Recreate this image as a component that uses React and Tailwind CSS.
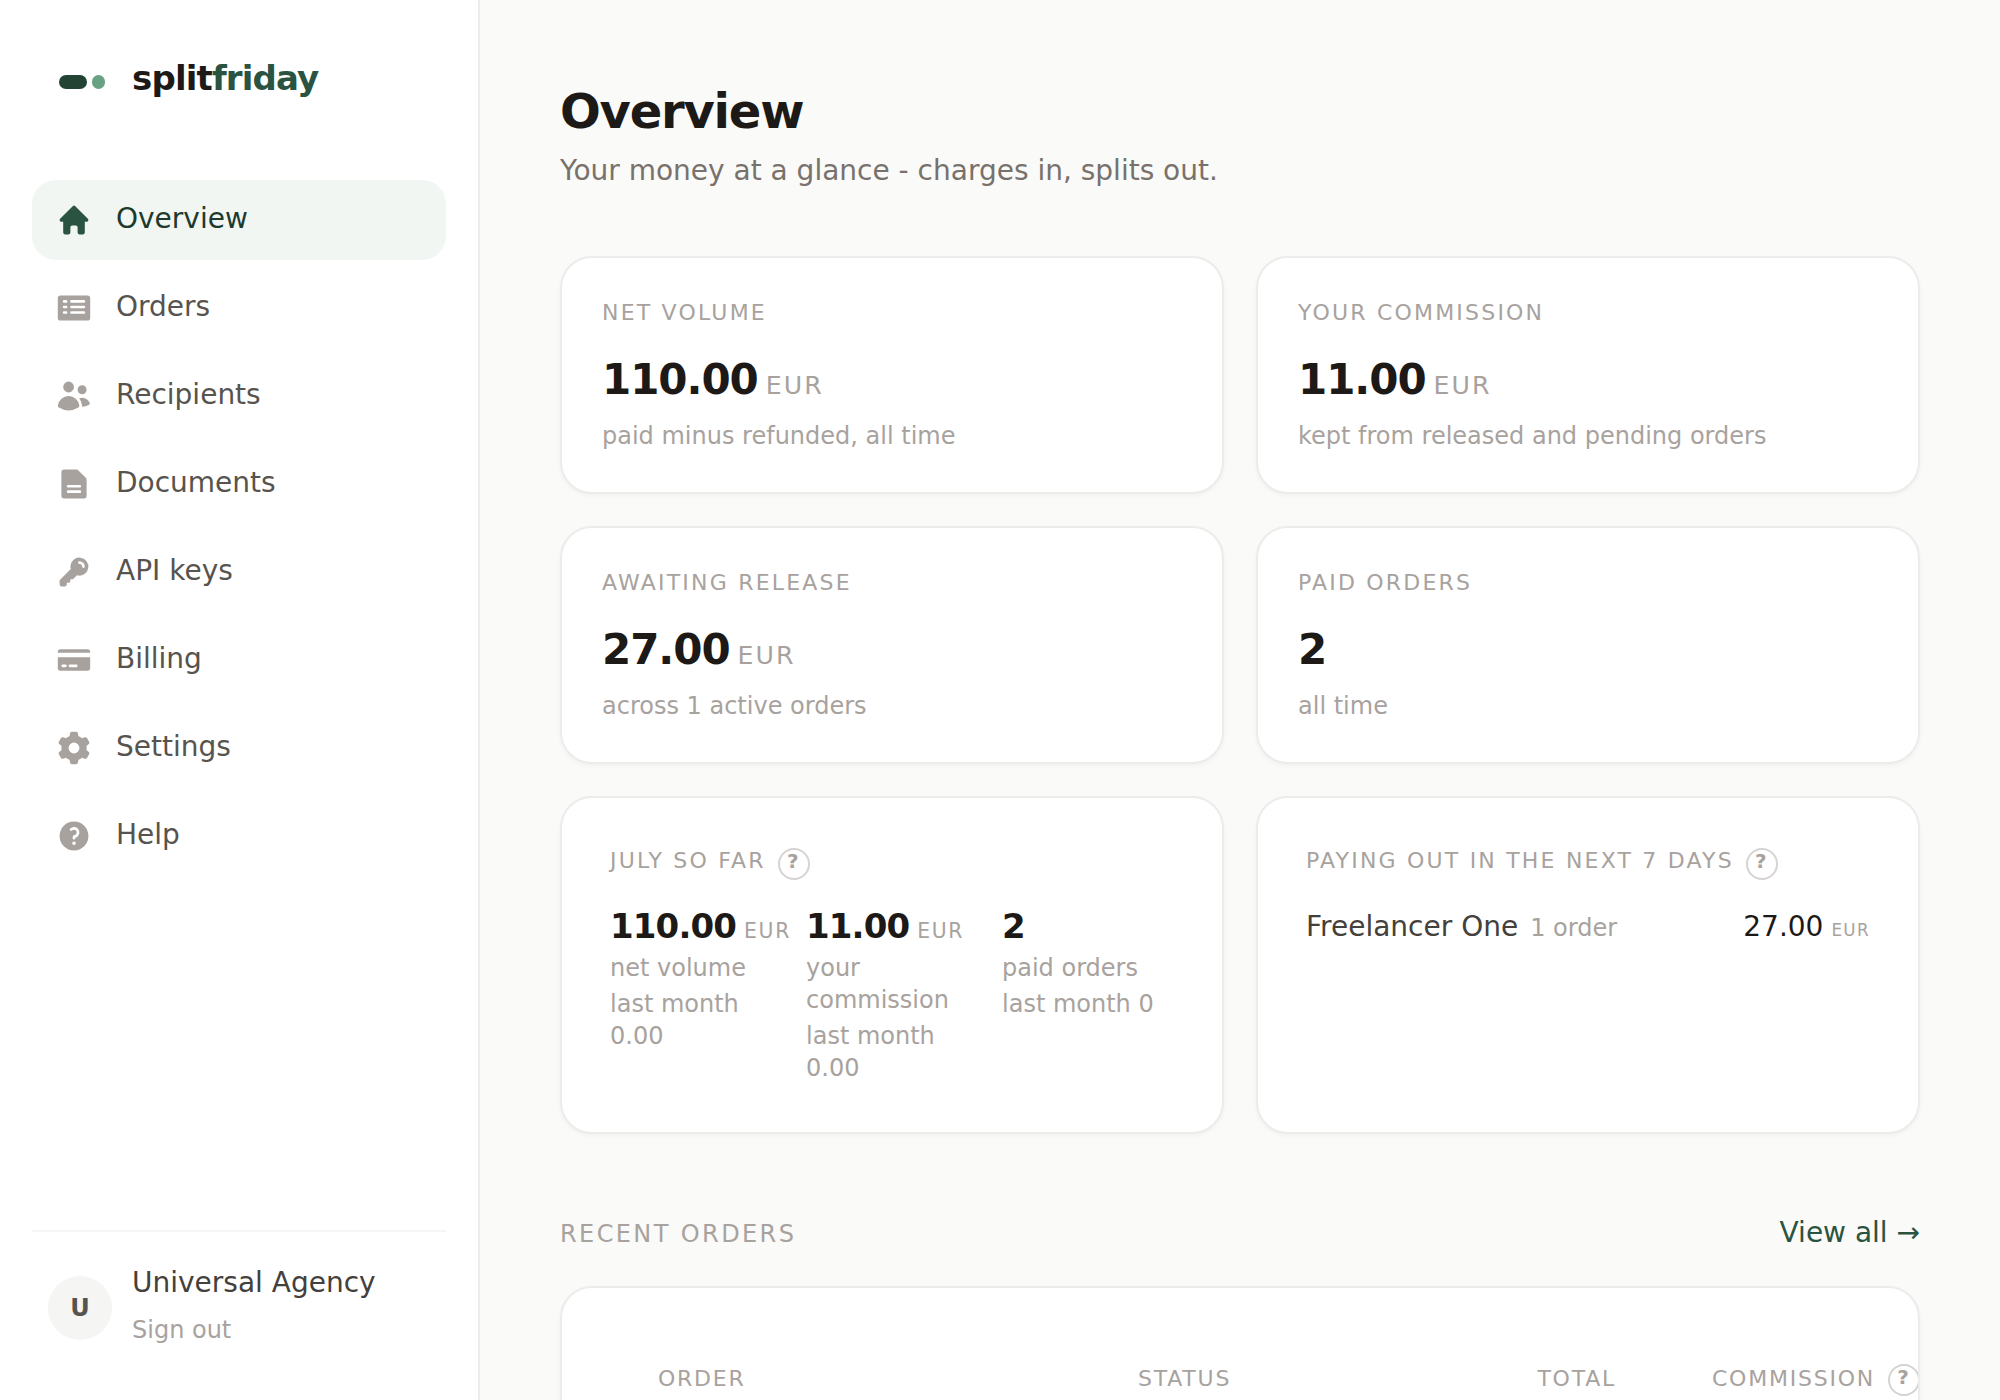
import {
  HiMiniHome, HiMiniUsers, HiMiniDocumentText, HiMiniKey,
  HiMiniCreditCard, HiMiniCog6Tooth, HiMiniQuestionMarkCircle,
} from "react-icons/hi2";

function OrdersIcon({ className }) {
  return (
    <svg viewBox="0 0 20 20" className={className} fill="currentColor">
      <path fillRule="evenodd" clipRule="evenodd" d="M2.5 3A1.5 1.5 0 0 0 1 4.5v11A1.5 1.5 0 0 0 2.5 17h15a1.5 1.5 0 0 0 1.500-1.500v-11A1.500 1.500 0 0 0 17.500 3h-15ZM4.500 5.600h1.100a.75.75 0 0 1 0 1.500H4.500a.75.75 0 0 1 0-1.500Zm4.100 0h6.900a.75.75 0 0 1 0 1.500H8.600a.75.75 0 0 1 0-1.500ZM4.500 8.700h1.100a.75.75 0 0 1 0 1.500H4.500a.75.75 0 0 1 0-1.500Zm4.100 0h6.900a.75.75 0 0 1 0 1.500H8.600a.75.75 0 0 1 0-1.500ZM4.500 11.750h1.100a.75.75 0 0 1 0 1.500H4.500a.75.75 0 0 1 0-1.500Zm4.100 0h6.900a.75.75 0 0 1 0 1.500H8.600a.75.75 0 0 1 0-1.500Z" />
    </svg>
  );
}

const NAV = [
  ["Overview", HiMiniHome],
  ["Orders", OrdersIcon],
  ["Recipients", HiMiniUsers],
  ["Documents", HiMiniDocumentText],
  ["API keys", HiMiniKey],
  ["Billing", HiMiniCreditCard],
  ["Settings", HiMiniCog6Tooth],
  ["Help", HiMiniQuestionMarkCircle],
];

function Hint() {
  return (
    <span className="flex size-8 shrink-0 items-start justify-center rounded-full border-2 border-[#d6d3d1] text-[20px] leading-[22px] font-bold text-[#a8a29e]">?</span>
  );
}

function Card({ className = "", children }) {
  return (
    <section className={`rounded-[32px] border-2 border-[#ececeb] bg-white shadow-[0_2px_4px_rgba(28,25,23,0.04)] ${className}`}>{children}</section>
  );
}

function Stat({ label, value, unit, note }) {
  return (
    <Card className="h-[238px] px-10 pt-[38px]">
      <div className="text-[22px] leading-[33px] tracking-[2.2px] text-[#a8a29e]">{label}</div>
      <div className="mt-[19px] flex h-16 items-baseline gap-2 leading-[64px]">
        <span className="text-[42px] font-bold tracking-[-1.05px] text-[#1c1917]">{value}</span>
        {unit && <span className="text-[25.2px] tracking-[0.08em] text-[#a8a29e]">{unit}</span>}
      </div>
      <div className="mt-[6px] text-[24px] leading-[36px] text-[#a8a29e]">{note}</div>
    </Card>
  );
}

function MonthStat({ value, unit, label, last }) {
  return (
    <div className="min-w-0 text-[24px] leading-[32px] text-[#a8a29e]">
      <div className="mb-[2px] flex h-12 items-baseline gap-2 whitespace-nowrap leading-[48px]">
        <span className="text-[34px] font-bold tracking-[-0.85px] text-[#1c1917]">{value}</span>
        {unit && <span className="text-[20.4px] tracking-[0.08em]">{unit}</span>}
      </div>
      <div>{label}</div>
      <div className="mt-1">last month {last}</div>
    </div>
  );
}

export default function App() {
  return (
    <div className="flex h-[1400px] w-[2000px] overflow-hidden bg-[#fafaf8] font-['DejaVu_Sans',sans-serif]">
      <aside className="flex w-[480px] shrink-0 flex-col border-r-2 border-[#ececeb] bg-white px-8">
        <div className="flex h-[180px] items-start pt-[54px] pl-[27px]">
          <div className="mt-[21px] flex items-center gap-[5px]">
            <span className="h-[14px] w-7 rounded-full bg-[#234434]" />
            <span className="h-[14px] w-[13px] rounded-full bg-[#68a283]" />
          </div>
          <div className="ml-[27px] text-[34px] leading-[48px] font-bold tracking-[-0.85px] text-[#1c1917]">split<span className="text-[#2a5441]">friday</span></div>
        </div>
        <nav className="flex flex-col gap-2">
          {NAV.map(([label, Icon], i) => (
            <a key={label} className={`flex h-20 items-center gap-6 rounded-[24px] px-6 text-[28px] ${i === 0 ? "bg-[#f1f6f3] text-[#1d3a2d]" : "text-[#57534e]"}`}>
              <Icon className={`size-9 ${i === 0 ? "text-[#2a5441]" : "text-[#a8a29e]"}`} />
              <span className="-mt-[3px] leading-[42px]">{label}</span>
            </a>
          ))}
        </nav>
        <div className="mt-auto flex h-[170px] gap-5 border-t-2 border-[#f5f5f4] pl-4">
          <div className="mt-11 flex size-16 items-center justify-center rounded-full bg-[#f5f5f4] text-[24px] font-bold text-[#57534e]">U</div>
          <div className="pt-[30px]">
            <div className="text-[28px] leading-[42px] text-[#44403c]">Universal Agency</div>
            <div className="mt-2 text-[24px] leading-[36px] text-[#a8a29e]">Sign out</div>
          </div>
        </div>
      </aside>
      <main className="flex min-w-0 flex-1 flex-col px-20 pt-[81px]">
        <h1 className="text-[48px] leading-[60px] font-bold tracking-[-1.2px] text-[#1c1917]">Overview</h1>
        <p className="mt-[9px] text-[28px] leading-[42px] text-[#78716c]">Your money at a glance - charges in, splits out.</p>
        <div className="mt-16 grid grid-cols-2 gap-8">
          <Stat label="NET VOLUME" value="110.00" unit="EUR" note="paid minus refunded, all time" />
          <Stat label="YOUR COMMISSION" value="11.00" unit="EUR" note="kept from released and pending orders" />
          <Stat label="AWAITING RELEASE" value="27.00" unit="EUR" note="across 1 active orders" />
          <Stat label="PAID ORDERS" value="2" note="all time" />
          <Card className="h-[338px] px-12 pt-[46px]">
            <div className="flex h-[38px] items-start gap-3 text-[22px] leading-[33px] tracking-[2.2px] text-[#a8a29e]">
              <span>JULY SO FAR</span>
              <div className="pt-1"><Hint /></div>
            </div>
            <div className="mt-5 grid grid-cols-3 gap-6">
              <MonthStat value="110.00" unit="EUR" label="net volume" last="0.00" />
              <MonthStat value="11.00" unit="EUR" label="your commission" last="0.00" />
              <MonthStat value="2" label="paid orders" last="0" />
            </div>
          </Card>
          <Card className="h-[338px] px-12 pt-[46px]">
            <div className="flex h-[38px] items-start gap-3 text-[22px] leading-[33px] tracking-[2.2px] text-[#a8a29e]">
              <span>PAYING OUT IN THE NEXT 7 DAYS</span>
              <div className="pt-1"><Hint /></div>
            </div>
            <div className="mt-6 flex items-baseline text-[28px] leading-[42px] text-[#44403c]">
              <span>Freelancer One</span>
              <span className="ml-3 text-[24px] text-[#a8a29e]">1 order</span>
              <span className="ml-auto text-[#1c1917]">27.00</span>
              <span className="ml-2 text-[16.8px] tracking-[0.08em] text-[#a8a29e]">EUR</span>
            </div>
          </Card>
        </div>
        <div className="mt-[76px] flex h-[76px] shrink-0 items-start justify-between">
          <h2 className="mt-[6px] text-[24px] leading-[36px] tracking-[2.4px] text-[#a8a29e]">RECENT ORDERS</h2>
          <a className="mt-[2px] text-[28px] leading-[42px] text-[#2a5441]">View all →</a>
        </div>
        <Card className="h-[300px] shrink-0 overflow-hidden pt-[74px] pl-24">
          <div className="flex w-[1400px] text-[22px] leading-[33px] tracking-[1.76px] text-[#a8a29e]">
            <div className="w-[480px]">ORDER</div>
            <div className="w-[300px]">STATUS</div>
            <div className="w-[178px] text-right">TOTAL</div>
            <div className="ml-[96px] flex gap-[13px]">COMMISSION<div className="pt-[2px]"><Hint /></div></div>
          </div>
        </Card>
      </main>
    </div>
  );
}
